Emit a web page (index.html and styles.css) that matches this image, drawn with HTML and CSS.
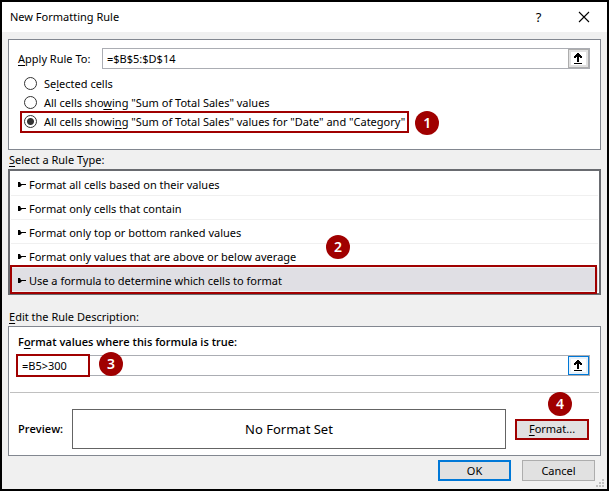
FILE: index.html
```html
<!DOCTYPE html>
<html lang="en">
<head>
<meta charset="utf-8">
<title>New Formatting Rule</title>
<link rel="stylesheet" href="styles.css">
</head>
<body>
<main class="dialog">
  <header class="titlebar">
    <h1 class="title">New Formatting Rule</h1>
    <button class="title-btn" type="button" aria-label="Help">?</button>
    <button class="title-btn" type="button" aria-label="Close">
      <svg width="12" height="12" viewBox="0 0 12 12"><path d="M1 1L11 11M11 1L1 11" fill="none" stroke="#000" stroke-width="1.1"/></svg>
    </button>
  </header>

  <form class="content">
    <section class="panel apply">
      <div class="apply-row">
        <label for="range"><u>A</u>pply Rule To:</label>
        <div class="field">
          <input id="range" type="text" value="=$B$5:$D$14">
          <button class="picker" type="button" aria-label="Collapse dialog">
            <svg width="15" height="15" viewBox="0 0 15 15"><path d="M6 2h2v1h1v1h1v1h1v2H9V6H8v5H6V6H5v1H3V5h1V4h1V3h1zM3 12h8v1H3z" fill="#000"/></svg>
          </button>
        </div>
      </div>
      <div class="scopes">
        <label class="scope"><input type="radio" name="scope"><span>Se<u>l</u>ected cells</span></label>
        <label class="scope"><input type="radio" name="scope"><span>All cells sho<u>w</u>ing "Sum of Total Sales" values</span></label>
        <label class="scope marked"><input type="radio" name="scope" checked><span>All cells showi<u>n</u>g "Sum of Total Sales" values for "Date" and "Category"</span><b class="badge badge-scope">1</b></label>
      </div>
    </section>

    <h2 class="heading heading-type"><u>S</u>elect a Rule Type:</h2>
    <ul class="rules">
      <li class="rule"><svg class="arrow" width="9" height="6" viewBox="0 0 9 6"><path d="M1 0h2l1 2h5v1H5L3 5H1z" fill="#000"/></svg>Format all cells based on their values</li>
      <li class="rule"><svg class="arrow" width="9" height="6" viewBox="0 0 9 6"><path d="M1 0h2l1 2h5v1H5L3 5H1z" fill="#000"/></svg>Format only cells that contain</li>
      <li class="rule"><svg class="arrow" width="9" height="6" viewBox="0 0 9 6"><path d="M1 0h2l1 2h5v1H5L3 5H1z" fill="#000"/></svg>Format only top or bottom ranked values</li>
      <li class="rule"><svg class="arrow" width="9" height="6" viewBox="0 0 9 6"><path d="M1 0h2l1 2h5v1H5L3 5H1z" fill="#000"/></svg>Format only values that are above or below average<b class="badge badge-rule">2</b></li>
      <li class="rule selected"><svg class="arrow" width="9" height="6" viewBox="0 0 9 6"><path d="M1 0h2l1 2h5v1H5L3 5H1z" fill="#000"/></svg>Use a formula to determine which cells to format</li>
    </ul>

    <h2 class="heading heading-edit"><u>E</u>dit the Rule Description:</h2>
    <section class="panel">
      <div class="formula">
        <label class="strong" for="formula">F<u>o</u>rmat values where this formula is true:</label>
        <div class="field field-formula">
          <input id="formula" type="text" value="=B5&gt;300">
          <button class="picker active" type="button" aria-label="Collapse dialog">
            <svg width="15" height="15" viewBox="0 0 15 15"><path d="M6 2h2v1h1v1h1v1h1v2H9V6H8v5H6V6H5v1H3V5h1V4h1V3h1zM3 12h8v1H3z" fill="#000"/></svg>
          </button>
          <b class="badge badge-formula">3</b>
        </div>
      </div>
      <div class="preview">
        <span class="strong">Preview:</span>
        <output class="sample">No Format Set</output>
        <div class="format-wrap">
          <button class="btn btn-format" type="button"><span><u>F</u>ormat...</span></button>
          <b class="badge badge-format">4</b>
        </div>
      </div>
    </section>

    <footer class="actions">
      <button class="btn btn-default" type="button">OK</button>
      <button class="btn" type="button">Cancel</button>
    </footer>
  </form>
  <svg class="grip" width="9" height="9" viewBox="0 0 9 9"><path d="M6 0h2v2H6zM3 3h2v2H3zM6 3h2v2H6zM0 6h2v2H0zM3 6h2v2H3zM6 6h2v2H6z" fill="#bfbfbf"/></svg>
</main>
</body>
</html>
```

FILE: styles.css
```css
*, *::before { box-sizing: border-box; }

body {
  margin: 0;
  font-family: "Noto Sans", "Open Sans", sans-serif;
  font-size: 11px;
  line-height: 16px;
  color: #000;
}

button, input, output { font: inherit; color: inherit; }
button { padding: 0; }
u { text-underline-offset: 2px; text-decoration-skip-ink: none; }

.dialog {
  position: relative;
  min-height: 100vh;
  border: 2px solid #000;
  background: #f0f0f0;
}

.titlebar {
  display: flex;
  align-items: center;
  height: 30px;
  padding: 0 1px 0 8px;
  background: #fff;
}
.title { flex: 1; margin: 0; font-size: 11px; font-weight: 400; }
.title-btn {
  display: grid;
  place-items: center;
  width: 45px;
  height: 28px;
  border: 0;
  background: none;
  font-size: 13px;
}

.content { padding: 7px 6px 0; }

.panel { border: 1px solid #828790; background: #fff; }
.apply { padding: 8px 10px 18px 9px; }

.apply-row { display: flex; align-items: center; }
.apply-row label { flex: 0 0 84px; }

.field {
  position: relative;
  display: flex;
  flex: 1;
  height: 21px;
  border: 1px solid #abadb3;
  background: #fff;
}
.field input {
  flex: 1;
  min-width: 0;
  padding: 0 4px;
  border: 0;
  outline: 0;
  background: none;
}
.picker {
  display: grid;
  place-items: center;
  width: 21px;
  border: 1px solid #adadad;
  background: #fff;
  box-shadow: inset 0 0 0 2px #e1e1e1;
}
.picker.active { border-color: #0078d7; box-shadow: inset 0 0 0 2px #e5f1fb; }

.scopes { padding: 5px 0 0 6px; }
.scope { display: flex; align-items: center; gap: 7px; height: 19px; }
.scope input {
  appearance: none;
  width: 13px;
  height: 13px;
  margin: 0;
  border: 1px solid #333;
  border-radius: 50%;
  background: #fff;
}
.scope input:checked { background: radial-gradient(circle, #333 3px, #fff 4px); }

/* Numbered callouts and the frames they point at */
.badge {
  position: absolute;
  display: grid;
  place-items: center;
  width: 24px;
  height: 24px;
  border-radius: 50%;
  background: #a00000;
  color: #fff;
  font-size: 14px;
  font-weight: 600;
}
.marked, .rule, .format-wrap { position: relative; }
.marked { width: max-content; }
.marked::before, .selected::before, .field-formula::before {
  content: "";
  position: absolute;
  border: 2px solid #a00000;
  pointer-events: none;
}
.marked::before { inset: -1px -4px -2px -4px; }
.selected::before { inset: -3px 1px -3px -1px; }
.field-formula::before { top: -2px; bottom: -2px; left: -2px; width: 74px; }
.badge-scope { left: calc(100% + 10px); top: -1px; }
.badge-rule { left: 315px; top: -9px; z-index: 1; }
.badge-formula { left: 81px; top: -4px; }
.badge-format { left: 33px; top: -27px; }

.heading { margin: 0 1px; font-size: 11px; font-weight: 400; line-height: 16px; }
.heading-type { padding: 2px 0 1px; }
.heading-edit { padding: 14px 0 1px; }

.rules {
  margin: 0;
  padding: 1px;
  border: 2px solid #696b70;
  list-style: none;
  background: #fff;
}
.rule {
  display: flex;
  align-items: center;
  gap: 3px;
  height: 24px;
  padding: 2px 6px 0;
  border-bottom: 1px solid #f0f0f0;
}
.selected { background: #e0dfe4; }

.strong { font-family: "Open Sans", "Noto Sans", sans-serif; font-weight: 600; }
.formula { padding: 7px 10px 16px 8px; }
.formula label { display: block; margin: 0 1px 5px; }
.preview {
  display: flex;
  align-items: center;
  margin: 0 1px;
  padding: 16px 10px 6px 8px;
  border-top: 1px solid #c0c0c0;
}
.preview .strong { flex: 0 0 54px; }
.sample {
  display: grid;
  place-items: center;
  flex: 1;
  height: 40px;
  margin-right: 9px;
  border: 1px solid #646464;
  font-size: 13px;
}

.btn {
  width: 73px;
  height: 21px;
  border: 1px solid #adadad;
  background: #e1e1e1;
}
.btn-format { display: block; width: 74px; border: 2px solid #a00000; line-height: 16px; }
.btn-default { border: 2px solid #0078d7; }

.actions {
  display: flex;
  justify-content: flex-end;
  gap: 11px;
  padding: 4px 6px 8px;
}

.grip { position: absolute; right: 2px; bottom: 1px; }
```
